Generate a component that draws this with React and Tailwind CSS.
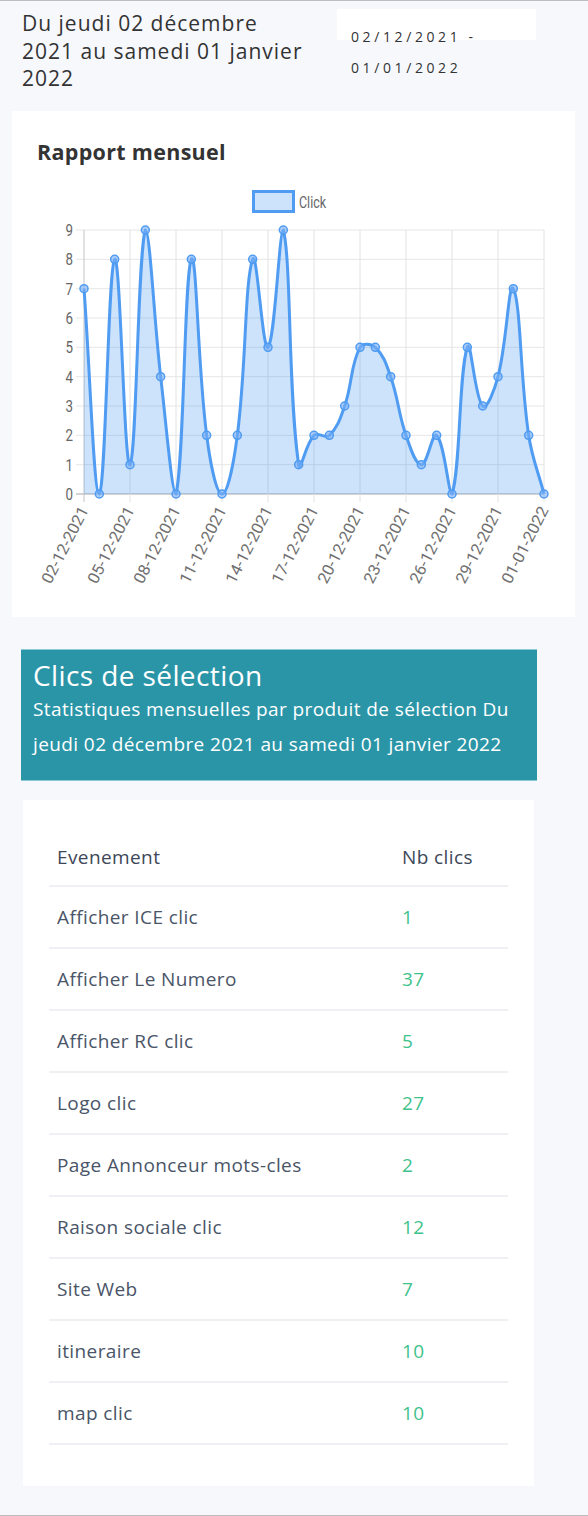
import React from 'react';

const data = [7, 0, 8, 1, 9, 4, 0, 8, 2, 0, 2, 8, 5, 9, 1, 2, 2, 3, 5, 5, 4, 2, 1, 2, 0, 5, 3, 4, 7, 2, 0];
const labels = ['02-12-2021', '05-12-2021', '08-12-2021', '11-12-2021', '14-12-2021', '17-12-2021', '20-12-2021', '23-12-2021', '26-12-2021', '29-12-2021', '01-01-2022'];

const rows = [
  ['Afficher ICE clic', 1],
  ['Afficher Le Numero', 37],
  ['Afficher RC clic', 5],
  ['Logo clic', 27],
  ['Page Annonceur mots-cles', 2],
  ['Raison sociale clic', 12],
  ['Site Web', 7],
  ['itineraire', 10],
  ['map clic', 10],
];

// chart area, in page coordinates
const X0 = 84;
const X1 = 544;
const Y0 = 494;
const Y9 = 230;
const px = (i) => X0 + (i * (X1 - X0)) / 30;
const py = (v) => Y0 - (v * (Y0 - Y9)) / 9;

const clamp = (v, a, b) => Math.max(a, Math.min(b, v));

// same spline as chart.js (tension 0.4)
function buildPath() {
  const pts = data.map((v, i) => ({ x: px(i), y: py(v) }));
  const ctrl = pts.map((cur, i) => {
    const prev = pts[i - 1] || cur;
    const next = pts[i + 1] || cur;
    const d01 = Math.hypot(cur.x - prev.x, cur.y - prev.y);
    const d12 = Math.hypot(next.x - cur.x, next.y - cur.y);
    let s01 = d01 / (d01 + d12);
    let s12 = d12 / (d01 + d12);
    if (isNaN(s01)) s01 = 0;
    if (isNaN(s12)) s12 = 0;
    const fa = 0.4 * s01;
    const fb = 0.4 * s12;
    return {
      px: clamp(cur.x - fa * (next.x - prev.x), X0, X1),
      py: clamp(cur.y - fa * (next.y - prev.y), Y9, Y0),
      nx: clamp(cur.x + fb * (next.x - prev.x), X0, X1),
      ny: clamp(cur.y + fb * (next.y - prev.y), Y9, Y0),
    };
  });
  let d = `M${pts[0].x},${pts[0].y}`;
  for (let i = 1; i < pts.length; i++) {
    d += ` C${ctrl[i - 1].nx},${ctrl[i - 1].ny} ${ctrl[i].px},${ctrl[i].py} ${pts[i].x},${pts[i].y}`;
  }
  return { d, pts };
}

const Chart = () => {
  const { d, pts } = buildPath();
  const area = `${d} L${X1},${Y0} L${X0},${Y0} Z`;
  return (
    <svg width="563" height="437" className="block">
      <g transform="translate(-12,-180)" fontFamily="Roboto, 'Liberation Sans', sans-serif">
        {/* legend */}
        <rect x="253.5" y="191.5" width="40" height="20" fill="rgba(54,140,240,0.25)" stroke="#4f9cf2" strokeWidth="3" />
        <text x="299" y="208" fontSize="17" fill="#666" textLength="27" lengthAdjust="spacingAndGlyphs">Click</text>

        {/* horizontal grid */}
        {Array.from({ length: 10 }).map((_, v) => (
          <g key={v}>
            <line x1="76" x2={X1} y1={py(v)} y2={py(v)} stroke={v === 0 ? '#c4c4c4' : '#e6e6e6'} strokeWidth={v === 0 ? 1.5 : 1} />
            <text x="73" y={py(v) + 6} fontSize="16.5" fill="#666" textAnchor="end" textLength="7.5" lengthAdjust="spacingAndGlyphs">{v}</text>
          </g>
        ))}

        {/* vertical grid + x labels */}
        {labels.map((l, k) => {
          const x = X0 + k * 46;
          return (
            <g key={l}>
              <line x1={x} x2={x} y1={Y9} y2={Y0 + 8} stroke={k === 0 ? '#c4c4c4' : '#e2e2e2'} strokeWidth="1" />
              <text
                x={x + 5}
                y={Y0 + 16}
                fontSize="16"
                fill="#707070"
                textAnchor="end"
                textLength="84"
                lengthAdjust="spacingAndGlyphs"
                transform={`rotate(-63 ${x + 5} ${Y0 + 16})`}
              >
                {l}
              </text>
            </g>
          );
        })}

        <path d={area} fill="rgba(54,140,240,0.25)" />
        <path d={d} fill="none" stroke="#4f9cf2" strokeWidth="3" />
        {pts.map((p, i) => (
          <circle key={i} cx={p.x} cy={p.y} r="4" fill="rgba(120,175,245,0.6)" stroke="#4f9cf2" strokeWidth="1.5" />
        ))}
      </g>
    </svg>
  );
};

export default function App() {
  return (
    <div className="h-[1516px] bg-[#f6f8fc] border-y border-[#bdbdbd] text-[#333] font-['Open_Sans','Lato',sans-serif]">
      {/* header */}
      <div className="flex h-[89px] pt-[9px] pl-[22px]">
        <div className="w-[284px] text-[21px] leading-[27.5px] tracking-[1px] text-[#333]">
          Du jeudi 02 décembre 2021 au samedi 01 janvier 2022
        </div>
        <div className="ml-[31px] w-[199px] -mt-[1px]">
          <div className="h-[31px] bg-white"></div>
          <div className="-mt-[19px] pl-[14px] text-[14px] leading-[31px] tracking-[3.6px] text-[#333]">
            02/12/2021 -<br />01/01/2022
          </div>
        </div>
      </div>

      {/* chart card */}
      <div className="mx-[12px] mt-[21px] w-[563px] h-[506px] bg-white">
        <div className="pt-[27px] pl-[25px] text-[21.5px] leading-[28px] tracking-[0.3px] font-bold text-[#333]">Rapport mensuel</div>
        <div className="mt-[14px]">
          <Chart />
        </div>
      </div>

      {/* teal header */}
      <div className="ml-[21px] mt-[32px] w-[516px] h-[132px] bg-[#2b95a8] border-y border-[#8ccbd6] px-[12px] pt-[8px] text-white">
        <div className="text-[28px] leading-[34px] tracking-[0.4px]">Clics de sélection</div>
        <div className="text-[19px] leading-[35px] tracking-[0.4px]">
          Statistiques mensuelles par produit de sélection Du jeudi 02 décembre 2021 au samedi 01 janvier 2022
        </div>
      </div>

      {/* table card */}
      <div className="ml-[23px] mt-[19px] w-[511px] bg-white pt-[30px] pb-[41px] px-[26px]">
        <table className="w-full border-collapse text-[19px] tracking-[0.4px]">
          <thead>
            <tr className="border-b-2 border-[#eef0f3] h-[56px]">
              <th className="w-[353px] pl-[8px] text-left font-normal text-[#3d4757]">Evenement</th>
              <th className="text-left font-normal text-[#3d4757]">Nb clics</th>
            </tr>
          </thead>
          <tbody>
            {rows.map(([name, n]) => (
              <tr key={name} className="border-b-2 border-[#eef0f3] h-[62px]">
                <td className="pl-[8px] text-[#4a5568]">{name}</td>
                <td className="text-[#3fc28c]">{n}</td>
              </tr>
            ))}
          </tbody>
        </table>
      </div>
    </div>
  );
}
